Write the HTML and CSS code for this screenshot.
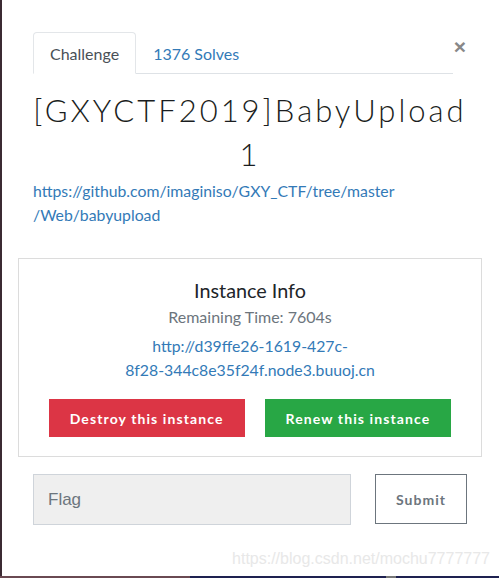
FILE: index.html
```html
<!DOCTYPE html>
<html lang="en">
<head>
<meta charset="utf-8">
<title>Challenge</title>
<link rel="stylesheet" href="styles.css">
</head>
<body>
<div class="modal">
  <div class="head">
    <ul class="tabs">
      <li class="tab active">Challenge</li>
      <li class="tab">1376 Solves</li>
    </ul>
    <span class="close">×</span>
  </div>
  <h2 class="title">[GXYCTF2019]BabyUpload 1</h2>
  <a class="src" href="#">https://github.com/imaginiso/GXY_CTF/tree/master<br>/Web/babyupload</a>
  <div class="instance">
    <h4 class="inst-title">Instance Info</h4>
    <div class="remain">Remaining Time: 7604s</div>
    <a class="inst-link" href="#">http://d39ffe26-1619-427c-<br>8f28-344c8e35f24f.node3.buuoj.cn</a>
    <div class="btns">
      <button class="btn destroy">Destroy this instance</button>
      <button class="btn renew">Renew this instance</button>
    </div>
  </div>
  <div class="flag-row">
    <input class="flag" type="text" placeholder="Flag">
    <button class="submit">Submit</button>
  </div>
  <div class="watermark">https://blog.csdn.net/mochu7777777</div>
</div>
<div class="strip"></div>
</body>
</html>
```
FILE: styles.css
```css
html, body {
  margin: 0;
  padding: 0;
}
body {
  width: 499px;
  height: 578px;
  overflow: hidden;
  background: #3b2a33;
  font-family: Lato, "Liberation Sans", sans-serif;
  color: #212529;
}
.modal {
  position: relative;
  margin-left: 2px;
  width: 464px;
  height: 576px;
  padding: 0 17px 0 16px;
  background: #fff;
  box-sizing: content-box;
}
.head {
  display: flex;
  align-items: flex-start;
  margin: 0 15px;
  padding-top: 32px;
}
.tabs {
  flex: 1;
  display: flex;
  list-style: none;
  margin: 0;
  padding: 0;
  border-bottom: 1px solid #dee2e6;
}
.tab {
  font-size: 16px;
  line-height: 24px;
  padding: 9px 16px 7px;
  border: 1px solid transparent;
  border-radius: 4px 4px 0 0;
  margin-bottom: -1px;
  color: #337ab7;
}
.tab.active {
  color: #495057;
  border-color: #e3e6e9 #e3e6e9 #fff;
  background: #fff;
}
.close {
  width: 14px;
  text-align: center;
  font-family: "Liberation Sans", sans-serif;
  font-weight: 700;
  font-size: 21px;
  line-height: 24px;
  margin-top: 3px;
  color: #888;
}
.title {
  margin: 14px 12px 0;
  font-family: Lato, sans-serif;
  font-weight: 300;
  font-size: 31px;
  line-height: 44px;
  letter-spacing: 3px;
  text-align: center;
  color: #1a1d20;
}
.src {
  display: block;
  margin: 3px 15px 0;
  font-size: 15.8px;
  line-height: 24px;
  color: #337ab7;
  text-decoration: none;
}
.instance {
  margin-top: 31px;
  border: 1px solid #dcdcdc;
  padding: 18px 0 19px;
  text-align: center;
}
.inst-title {
  margin: 0;
  font-size: 19.8px;
  font-weight: 400;
  line-height: 27px;
  color: #212529;
}
.remain {
  margin-top: 2px;
  font-size: 16px;
  line-height: 22px;
  color: #6c757d;
}
.inst-link {
  display: block;
  margin-top: 6px;
  font-size: 15.8px;
  line-height: 24px;
  color: #337ab7;
  text-decoration: none;
}
.btns {
  display: flex;
  justify-content: center;
  gap: 20px;
  margin-top: 17px;
}
.btn {
  height: 38px;
  padding: 0 21px;
  border: 0;
  border-radius: 0;
  font-family: Lato, sans-serif;
  font-weight: 700;
  font-size: 14px;
  letter-spacing: 1.1px;
  color: #fff;
}
.destroy { background: #dc3545; }
.renew { background: #28a745; }
.flag-row {
  display: flex;
  align-items: flex-start;
  gap: 24px;
  margin: 17px 15px 0;
}
.flag {
  width: 318px;
  height: 51px;
  box-sizing: border-box;
  margin: 0;
  padding: 0 0 0 14px;
  border: 1px solid #cfd4da;
  border-radius: 0;
  background: #efefef;
  font-family: "Liberation Sans", Arial, sans-serif;
  font-size: 17px;
  color: #495057;
  outline: none;
}
.flag::placeholder {
  color: #6c757d;
}
.submit {
  width: 92px;
  height: 50px;
  box-sizing: border-box;
  margin: 0;
  border: 1px solid #6c757d;
  border-radius: 0;
  background: #fff;
  font-family: Lato, sans-serif;
  font-weight: 700;
  font-size: 14px;
  letter-spacing: 1px;
  color: #6c757d;
}
.watermark {
  position: absolute;
  right: 9px;
  top: 550px;
  font-family: "Liberation Sans", Arial, sans-serif;
  font-size: 16px;
  color: #e8e8e8;
}
.strip {
  height: 2px;
  background: linear-gradient(to right, #6a4a52 0, #6a4a52 190px, #1e2150 190px, #1e2150 386px, #777 386px, #777 396px, #1e2150 396px);
}
```
